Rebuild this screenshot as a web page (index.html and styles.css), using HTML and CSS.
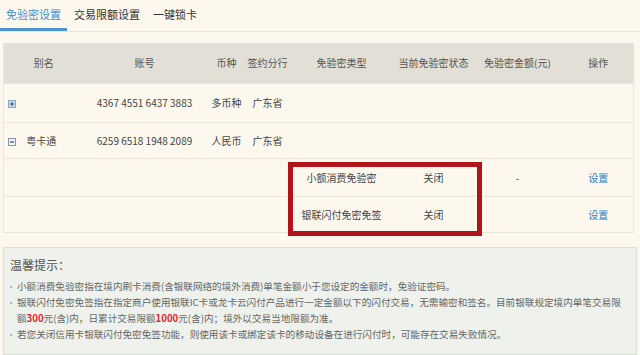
FILE: index.html
```html
<!DOCTYPE html>
<html lang="zh-CN">
<head>
  <meta charset="UTF-8" />
  <meta name="viewport" content="width=device-width, initial-scale=1" />
  <title>免验密设置</title>
  <link rel="stylesheet" href="styles.css">
</head>
<body>
  <div class="tabs">
    <a class="tab active">免验密设置</a>
    <a class="tab">交易限额设置</a>
    <a class="tab">一键锁卡</a>
  </div>

  <div class="table-wrap">
    <table class="card-table">
      <colgroup>
        <col style="width:80px">
        <col style="width:122px">
        <col style="width:42px">
        <col style="width:40px">
        <col style="width:108px">
        <col style="width:76px">
        <col style="width:92px">
        <col style="width:70px">
      </colgroup>
      <thead>
        <tr>
          <th>别名</th>
          <th>账号</th>
          <th>币种</th>
          <th>签约分行</th>
          <th>免验密类型</th>
          <th>当前免验密状态</th>
          <th>免验密金额(元)</th>
          <th>操作</th>
        </tr>
      </thead>
      <tbody>
        <tr class="row-a">
          <td class="alias">
            <svg class="toggle" width="8" height="8" viewBox="0 0 8 8"><rect x="0.5" y="0.5" width="7" height="7" fill="#d2e1f1" stroke="#86a6c8"/><path d="M2 4h4M4 2v4" stroke="#2d5a8c" stroke-width="1.2"/></svg>
          </td>
          <td>4367 4551 6437 3883</td>
          <td>多币种</td>
          <td>广东省</td>
          <td></td>
          <td></td>
          <td></td>
          <td></td>
        </tr>
        <tr class="row-b">
          <td class="alias">
            <svg class="toggle" width="8" height="8" viewBox="0 0 8 8"><rect x="0.5" y="0.5" width="7" height="7" fill="#f4f6fa" stroke="#7f97b3"/><path d="M2 4h4" stroke="#2d4a6c" stroke-width="1.2"/></svg>
            <span>粤卡通</span>
          </td>
          <td>6259 6518 1948 2089</td>
          <td>人民币</td>
          <td>广东省</td>
          <td></td>
          <td></td>
          <td></td>
          <td></td>
        </tr>
        <tr class="row-c">
          <td></td>
          <td></td>
          <td></td>
          <td></td>
          <td>小额消费免验密</td>
          <td>关闭</td>
          <td>-</td>
          <td><a class="link">设置</a></td>
        </tr>
        <tr class="row-b">
          <td></td>
          <td></td>
          <td></td>
          <td></td>
          <td>银联闪付免密免签</td>
          <td>关闭</td>
          <td></td>
          <td><a class="link">设置</a></td>
        </tr>
      </tbody>
    </table>
    <div class="highlight"></div>
  </div>

  <div class="tips">
    <h3>温馨提示：</h3>
    <ul>
      <li>小额消费免验密指在境内刷卡消费(含银联网络的境外消费)单笔金额小于您设定的金额时，免验证密码。</li>
      <li>银联闪付免密免签指在指定商户使用银联IC卡或龙卡云闪付产品进行一定金额以下的闪付交易，无需输密和签名。目前银联规定境内单笔交易限额<b>300</b>元(含)内，日累计交易限额<b>1000</b>元(含)内；境外以交易当地限额为准。</li>
      <li>若您关闭信用卡银联闪付免密免签功能，则使用该卡或绑定该卡的移动设备在进行闪付时，可能存在交易失败情况。</li>
    </ul>
  </div>
</body>
</html>
```

FILE: styles.css
```css
* {
  box-sizing: border-box;
}
body {
  margin: 0;
  font-family: "Noto Sans CJK SC", "Noto Sans", sans-serif;
  background: #fcf8ee;
  color: #444;
  font-size: 10px;
}
.tabs {
  display: flex;
  gap: 1px;
  height: 32px;
  border-bottom: 1px solid #ebe5d6;
}
.tab {
  display: block;
  padding: 0 6px;
  font-size: 11px;
  line-height: 29px;
  color: #333;
  border-bottom: 3px solid transparent;
}
.tab.active {
  color: #3f8fd2;
  border-bottom-color: #4d94cf;
}
.table-wrap {
  position: relative;
  margin: 11px 0 0 3px;
  width: 630px;
}
.card-table {
  width: 630px;
  table-layout: fixed;
  border-collapse: collapse;
  border: 1px solid #ebe5d7;
  border-top: none;
}
.card-table th {
  background: #e1dfd6;
  height: 40px;
  font-weight: normal;
  color: #555;
  white-space: nowrap;
  padding: 0;
}
.card-table td {
  height: 36px;
  border-top: 1px solid #ede7d9;
  text-align: center;
  white-space: nowrap;
  padding: 0;
  color: #444;
}
.row-a td {
  height: 39px;
}
.row-c td {
  height: 38px;
}
.card-table td.alias {
  text-align: left;
  padding-left: 4px;
}
.toggle {
  vertical-align: -1px;
}
.alias span {
  margin-left: 8px;
}
.link {
  color: #2b7dc4;
  cursor: pointer;
}
.highlight {
  position: absolute;
  left: 285px;
  top: 119px;
  width: 194px;
  height: 74px;
  border: 5px solid #b1131b;
}
.tips {
  margin: 14px 3px 0 3px;
  width: 634px;
  height: 108px;
  background: #eef1ec;
  border: 1px solid #d9ded6;
  padding: 8px 10px 0 6px;
  color: #666;
}
.tips h3 {
  margin: 0 0 4px;
  font-size: 12px;
  font-weight: normal;
  line-height: 18px;
  color: #555;
}
.tips ul {
  margin: 0;
  padding: 0;
  list-style: none;
  font-size: 9.6px;
}
.tips li {
  line-height: 16px;
  padding-left: 7px;
  text-indent: -7px;
}
.tips li::before {
  content: "";
  display: inline-block;
  width: 2px;
  height: 2px;
  margin-right: 5px;
  vertical-align: middle;
  text-indent: 0;
  background: #b5b5b5;
}
.tips b {
  color: #e3262b;
}
```
